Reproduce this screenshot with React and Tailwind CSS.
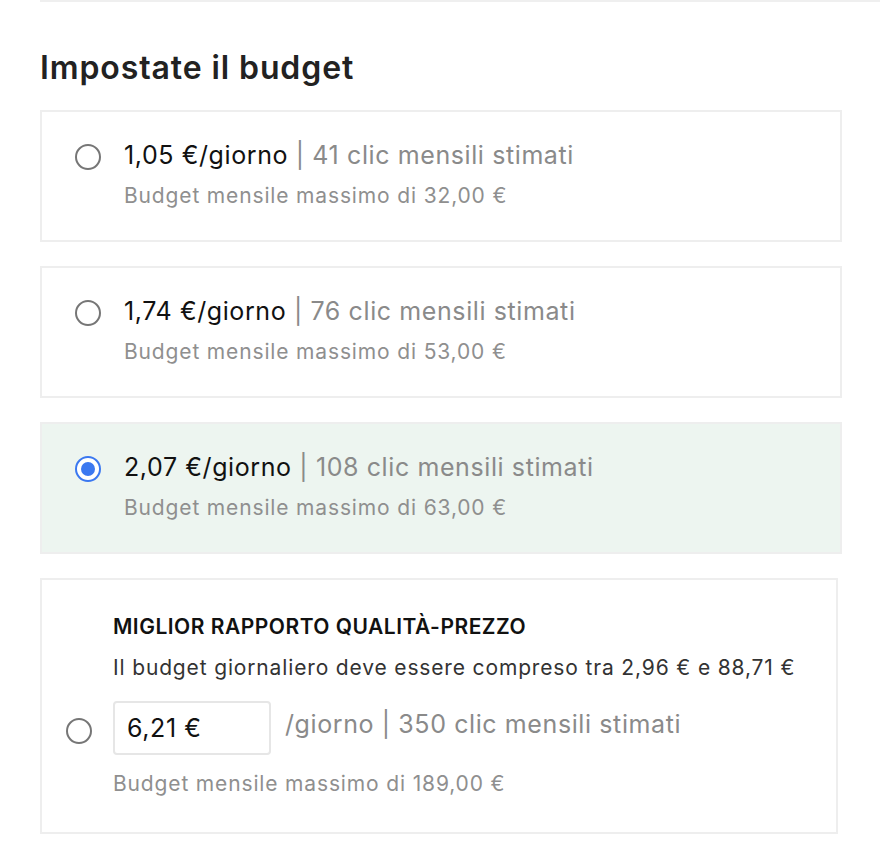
import React, { useState } from 'react'

const options = [
  { id: 'a', price: '1,05 €/giorno', clicks: '41 clic mensili stimati', max: '32,00 €' },
  { id: 'b', price: '1,74 €/giorno', clicks: '76 clic mensili stimati', max: '53,00 €' },
  { id: 'c', price: '2,07 €/giorno', clicks: '108 clic mensili stimati', max: '63,00 €' },
]

const Radio = ({ checked }) => (
  <span
    className={`flex h-[26px] w-[26px] shrink-0 items-center justify-center rounded-full border-2 ${
      checked ? 'border-[#3b78f0] bg-white' : 'border-[#767676] bg-white'
    }`}
  >
    {checked && <span className="h-[14px] w-[14px] rounded-full bg-[#3b78f0]" />}
  </span>
)

export default function App() {
  const [selected, setSelected] = useState('c')
  const [custom, setCustom] = useState('6,21 €')

  return (
    <div className="min-h-[852px] bg-white pl-10 font-['Inter',sans-serif] text-[#222]">
      <div className="h-[2px] bg-[#efefef]" />

      <h2 className="mt-[46px] text-[32px] font-semibold leading-10 tracking-[0.9px] text-[#222]">
        Impostate il budget
      </h2>

      <div className="mt-[22px] flex w-[802px] flex-col gap-6">
        {options.map((o) => {
          const on = selected === o.id
          return (
            <label
              key={o.id}
              onClick={() => setSelected(o.id)}
              className={`flex h-[132px] cursor-pointer items-start gap-[23px] border-2 border-[#eeeeee] px-[33px] pt-[27px] ${
                on ? 'bg-[#edf5f0]' : 'bg-white'
              }`}
            >
              <span className="mt-[5px]">
                <Radio checked={on} />
              </span>
              <div>
                <div className="text-[25px] leading-[32px] tracking-[0.6px]">
                  <span className="text-[#111]">{o.price}</span>
                  <span className="text-[#8a8a8a]"> | {o.clicks}</span>
                </div>
                <div className="mt-[13px] text-[21px] leading-6 tracking-[0.85px] text-[#8f8f8f]">
                  Budget mensile massimo di {o.max}
                </div>
              </div>
            </label>
          )
        })}

        <label
          onClick={() => setSelected('d')}
          className={`flex h-[256px] w-[798px] cursor-pointer flex-col border-2 border-[#eeeeee] pl-[71px] pt-[35px] ${
            selected === 'd' ? 'bg-[#edf5f0]' : 'bg-white'
          }`}
        >
          <div className="text-[21px] font-semibold uppercase leading-6 tracking-[0.5px] text-[#111]">
            Miglior rapporto qualità-prezzo
          </div>
          <div className="mt-[17px] text-[21px] leading-6 tracking-[0.85px] text-[#333]">
            Il budget giornaliero deve essere compreso tra 2,96 € e 88,71 €
          </div>
          <div className="-ml-[47px] mt-[21px] flex items-center">
            <span className="mt-[6px]">
              <Radio checked={selected === 'd'} />
            </span>
            <input
              value={custom}
              onChange={(e) => setCustom(e.target.value)}
              className="ml-[21px] h-[54px] w-[158px] rounded-[4px] border-2 border-[#e6e6e6] bg-white px-[12px] text-[25px] tracking-[0.6px] text-[#111] outline-none"
            />
            <span className="ml-[14px] pb-[6px] text-[25px] tracking-[0.6px] text-[#8a8a8a]">
              /giorno | 350 clic mensili stimati
            </span>
          </div>
          <div className="mt-[17px] text-[21px] leading-6 tracking-[0.85px] text-[#8f8f8f]">
            Budget mensile massimo di 189,00 €
          </div>
        </label>
      </div>
    </div>
  )
}
